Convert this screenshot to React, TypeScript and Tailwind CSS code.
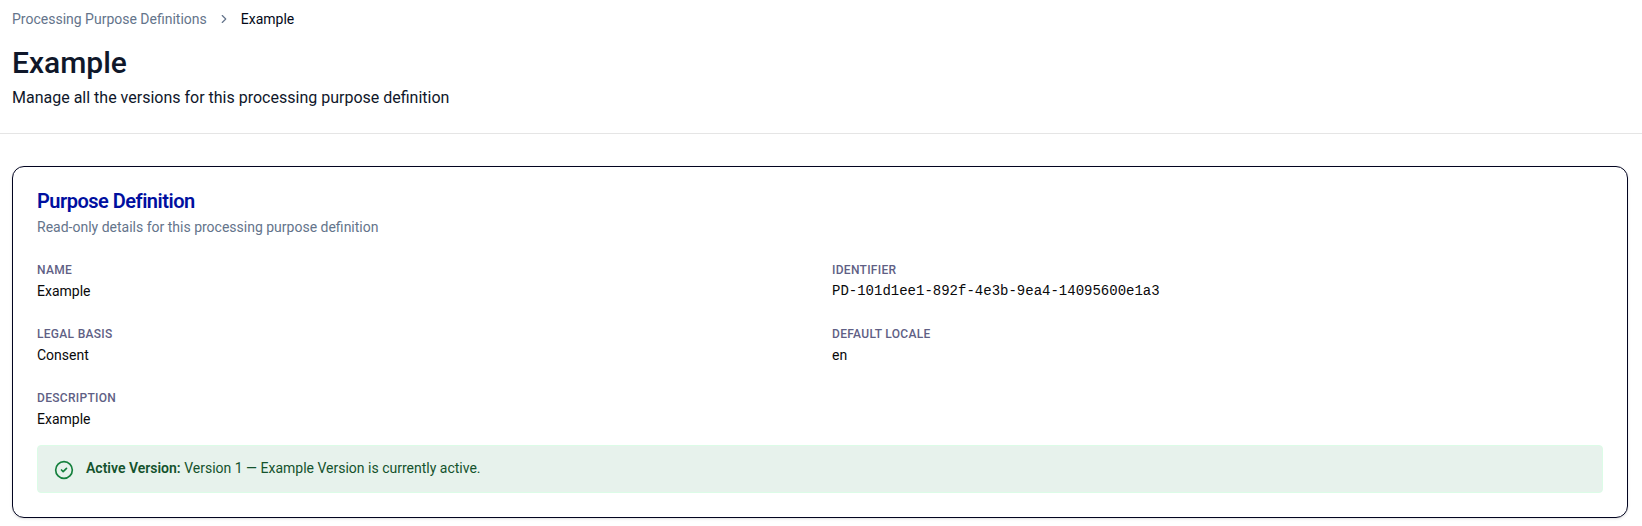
import { ChevronRight, CircleCheck } from "lucide-react";
import type { ReactNode } from "react";

function Field({ label, children }: { label: string; children: ReactNode }) {
  return (
    <div className="space-y-[3px]">
      <dt className="text-xs font-medium uppercase leading-4 tracking-wide text-[#5f5f85]">{label}</dt>
      <dd className="text-sm leading-5 text-[#09090b]">{children}</dd>
    </div>
  );
}

export default function App() {
  return (
    <div className="bg-white font-[Roboto,sans-serif] text-[#0f172a]">
      <header className="border-b border-[#e5e5e5] px-3 pt-[9px] pb-[23px]">
        <nav aria-label="Breadcrumb">
          <ol className="flex items-center gap-2.5 text-sm">
            <li>
              <a href="#" className="text-[#64748b]">Processing Purpose Definitions</a>
            </li>
            <li aria-hidden="true">
              <ChevronRight className="size-3.5 text-[#64748b]" />
            </li>
            <li aria-current="page" className="text-[#020817]">Example</li>
          </ol>
        </nav>
        <h1 className="mt-4 text-3xl font-medium">Example</h1>
        <p className="mt-[5px] text-base">Manage all the versions for this processing purpose definition</p>
      </header>
      <main className="pt-8 pr-3.5 pb-2 pl-3">
        <section className="rounded-xl border border-[#020420] p-6 shadow-sm">
          <h2 className="text-xl font-semibold leading-5 tracking-tight text-[#000f9f]">Purpose Definition</h2>
          <p className="mt-1.5 text-sm text-[#64748b]">Read-only details for this processing purpose definition</p>
          <dl className="mt-[25px] grid grid-cols-2 gap-x-6 gap-y-[25px]">
            <Field label="Name">Example</Field>
            <Field label="Identifier">
              <span className="block font-['Liberation_Mono',monospace]">PD-101d1ee1-892f-4e3b-9ea4-14095600e1a3</span>
            </Field>
            <Field label="Legal basis">Consent</Field>
            <Field label="Default locale">en</Field>
            <Field label="Description">Example</Field>
          </dl>
          <div role="status" className="mt-4 flex items-start gap-3 rounded border border-[#dcfce7] bg-[#e7f2ec] px-4 py-3 text-sm text-[#14532d]">
            <CircleCheck className="mt-0.5 size-5 shrink-0 text-[#15803d]" />
            <p>
              <strong className="font-semibold">Active Version:</strong> Version 1 — Example Version is currently active.
            </p>
          </div>
        </section>
      </main>
    </div>
  );
}
